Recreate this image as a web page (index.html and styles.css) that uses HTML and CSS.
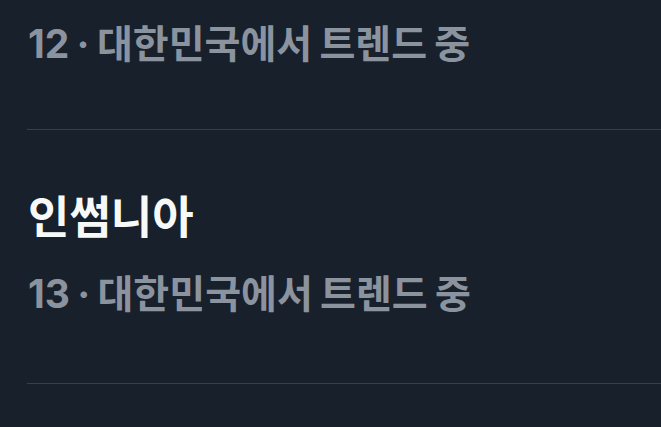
FILE: index.html
```html
<!DOCTYPE html>
<html>
<head>
<meta charset="utf-8">
<title>트렌드</title>
<link rel="stylesheet" href="styles.css">
</head>
<body>
	<ul class="trends">
		<li class="trend partial">
			<div class="meta">12 · 대한민국에서 트렌드 중</div>
		</li>
		<li class="trend">
			<div class="name">인썸니아</div>
			<div class="meta">13 · 대한민국에서 트렌드 중</div>
		</li>
	</ul>
</body>
</html>
```
FILE: styles.css
```css
body {
	margin: 0;
	background-color: #18202b;
	font-family: Inter, "Noto Sans CJK KR", sans-serif;
}
ul.trends {
	list-style: none;
	margin: 0;
	padding: 0 0 0 27px;
}
.trend {
	border-bottom: 1px solid #373f4b;
	padding: 60px 0 61px 1px;
}
.trend.partial {
	padding-top: 16px;
	padding-bottom: 57px;
}
.name {
	color: #f7f9f9;
	font-size: 45px;
	font-weight: 700;
	line-height: 56px;
	margin-bottom: 20px;
}
.meta {
	color: #8b939f;
	font-size: 39px;
	font-weight: 700;
	line-height: 56px;
	word-spacing: -2px;
}
```
